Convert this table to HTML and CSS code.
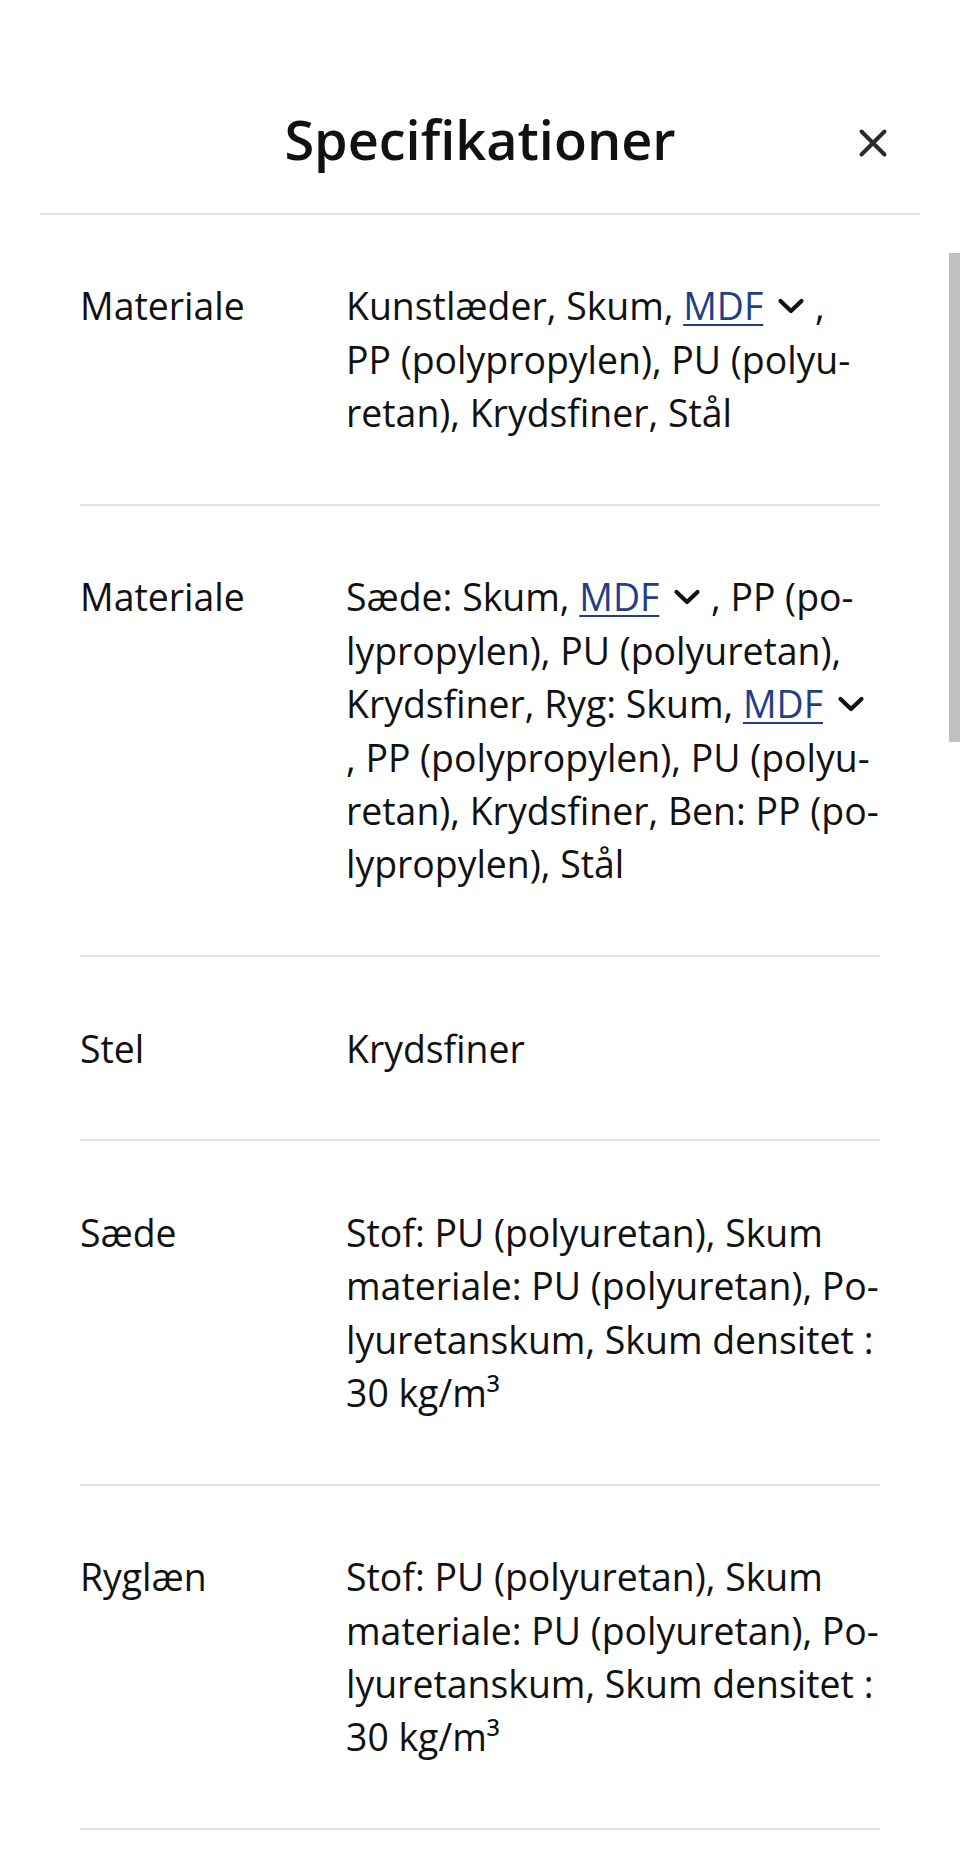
FILE: index.html
```html
<!DOCTYPE html>
<html lang="da">
<head>
<meta charset="utf-8">
<title>Specifikationer</title>
<link rel="stylesheet" href="styles.css">
</head>
<body>
<div class="sheet">
  <header class="sheet-header">
    <h1 class="sheet-title">Specifikationer</h1>
    <button class="close-btn" aria-label="Luk">
      <svg width="30" height="30" viewBox="0 0 30 30" aria-hidden="true"><path d="M3.5 3.5L26.5 26.5M26.5 3.5L3.5 26.5" fill="none" stroke="#2b2b2b" stroke-width="4" stroke-linecap="round"/></svg>
    </button>
  </header>

  <div class="spec-list">
    <div class="spec-row">
      <div class="spec-label">Materiale</div>
      <div class="spec-value">Kunstlæder, Skum, <a class="spec-link" href="#">MDF</a><svg class="chev" width="28" height="18" viewBox="0 0 28 18" aria-hidden="true"><path d="M3.5 4L14 14L24.5 4" fill="none" stroke="#111" stroke-width="4.2" stroke-linecap="round" stroke-linejoin="round"/></svg> ,<br>PP (polypropylen), PU (polyu-<br>retan), Krydsfiner, Stål</div>
    </div>
    <div class="spec-row">
      <div class="spec-label">Materiale</div>
      <div class="spec-value">Sæde: Skum, <a class="spec-link" href="#">MDF</a><svg class="chev" width="28" height="18" viewBox="0 0 28 18" aria-hidden="true"><path d="M3.5 4L14 14L24.5 4" fill="none" stroke="#111" stroke-width="4.2" stroke-linecap="round" stroke-linejoin="round"/></svg> , PP (po-<br>lypropylen), PU (polyuretan),<br>Krydsfiner, Ryg: Skum, <a class="spec-link" href="#">MDF</a><svg class="chev" width="28" height="18" viewBox="0 0 28 18" aria-hidden="true"><path d="M3.5 4L14 14L24.5 4" fill="none" stroke="#111" stroke-width="4.2" stroke-linecap="round" stroke-linejoin="round"/></svg><br>, PP (polypropylen), PU (polyu-<br>retan), Krydsfiner, Ben: PP (po-<br>lypropylen), Stål</div>
    </div>
    <div class="spec-row">
      <div class="spec-label">Stel</div>
      <div class="spec-value">Krydsfiner</div>
    </div>
    <div class="spec-row">
      <div class="spec-label">Sæde</div>
      <div class="spec-value">Stof: PU (polyuretan), Skum<br>materiale: PU (polyuretan), Po-<br>lyuretanskum, Skum densitet :<br>30 kg/m³</div>
    </div>
    <div class="spec-row">
      <div class="spec-label">Ryglæn</div>
      <div class="spec-value">Stof: PU (polyuretan), Skum<br>materiale: PU (polyuretan), Po-<br>lyuretanskum, Skum densitet :<br>30 kg/m³</div>
    </div>
  </div>

  <div class="scroll-thumb"></div>
</div>
</body>
</html>
```

FILE: styles.css
```css
html, body {
  margin: 0;
  padding: 0;
  background: #ffffff;
}

body {
  font-family: "Open Sans", "Noto Sans", sans-serif;
  color: #111111;
  height: 1859px;
  overflow: hidden;
}

.sheet {
  position: relative;
  min-height: 1859px;
}

.sheet-header {
  display: grid;
  grid-template-columns: 1fr auto 1fr;
  margin: 0 40px;
  padding: 107px 0 42px;
  border-bottom: 2px solid #e2e2e4;
}

.sheet-title {
  grid-column: 2;
  margin: 0;
  font-size: 54px;
  line-height: 64px;
  font-weight: 600;
  color: #111111;
  white-space: nowrap;
}

.close-btn {
  grid-column: 3;
  justify-self: end;
  align-self: start;
  margin: 12px 23px 0 0;
  width: 48px;
  height: 48px;
  padding: 0;
  border: 0;
  background: transparent;
  display: flex;
  align-items: center;
  justify-content: center;
}

.spec-list {
  margin: 0 80px;
}

.spec-row {
  display: grid;
  grid-template-columns: 266px 1fr;
  padding: 64.4px 0;
  border-bottom: 2px solid #e2e2e4;
  font-size: 37.4px;
  line-height: 53.4px;
}

.spec-label,
.spec-value {
  white-space: nowrap;
}

.spec-link {
  color: #1f3f88;
  text-decoration: underline;
  text-decoration-thickness: 2px;
  text-underline-offset: 4px;
}

.chev {
  margin-left: 14px;
  vertical-align: 5px;
}

.scroll-thumb {
  position: absolute;
  top: 253px;
  right: 0;
  width: 11px;
  height: 489px;
  background: #c1c1c1;
}
```
